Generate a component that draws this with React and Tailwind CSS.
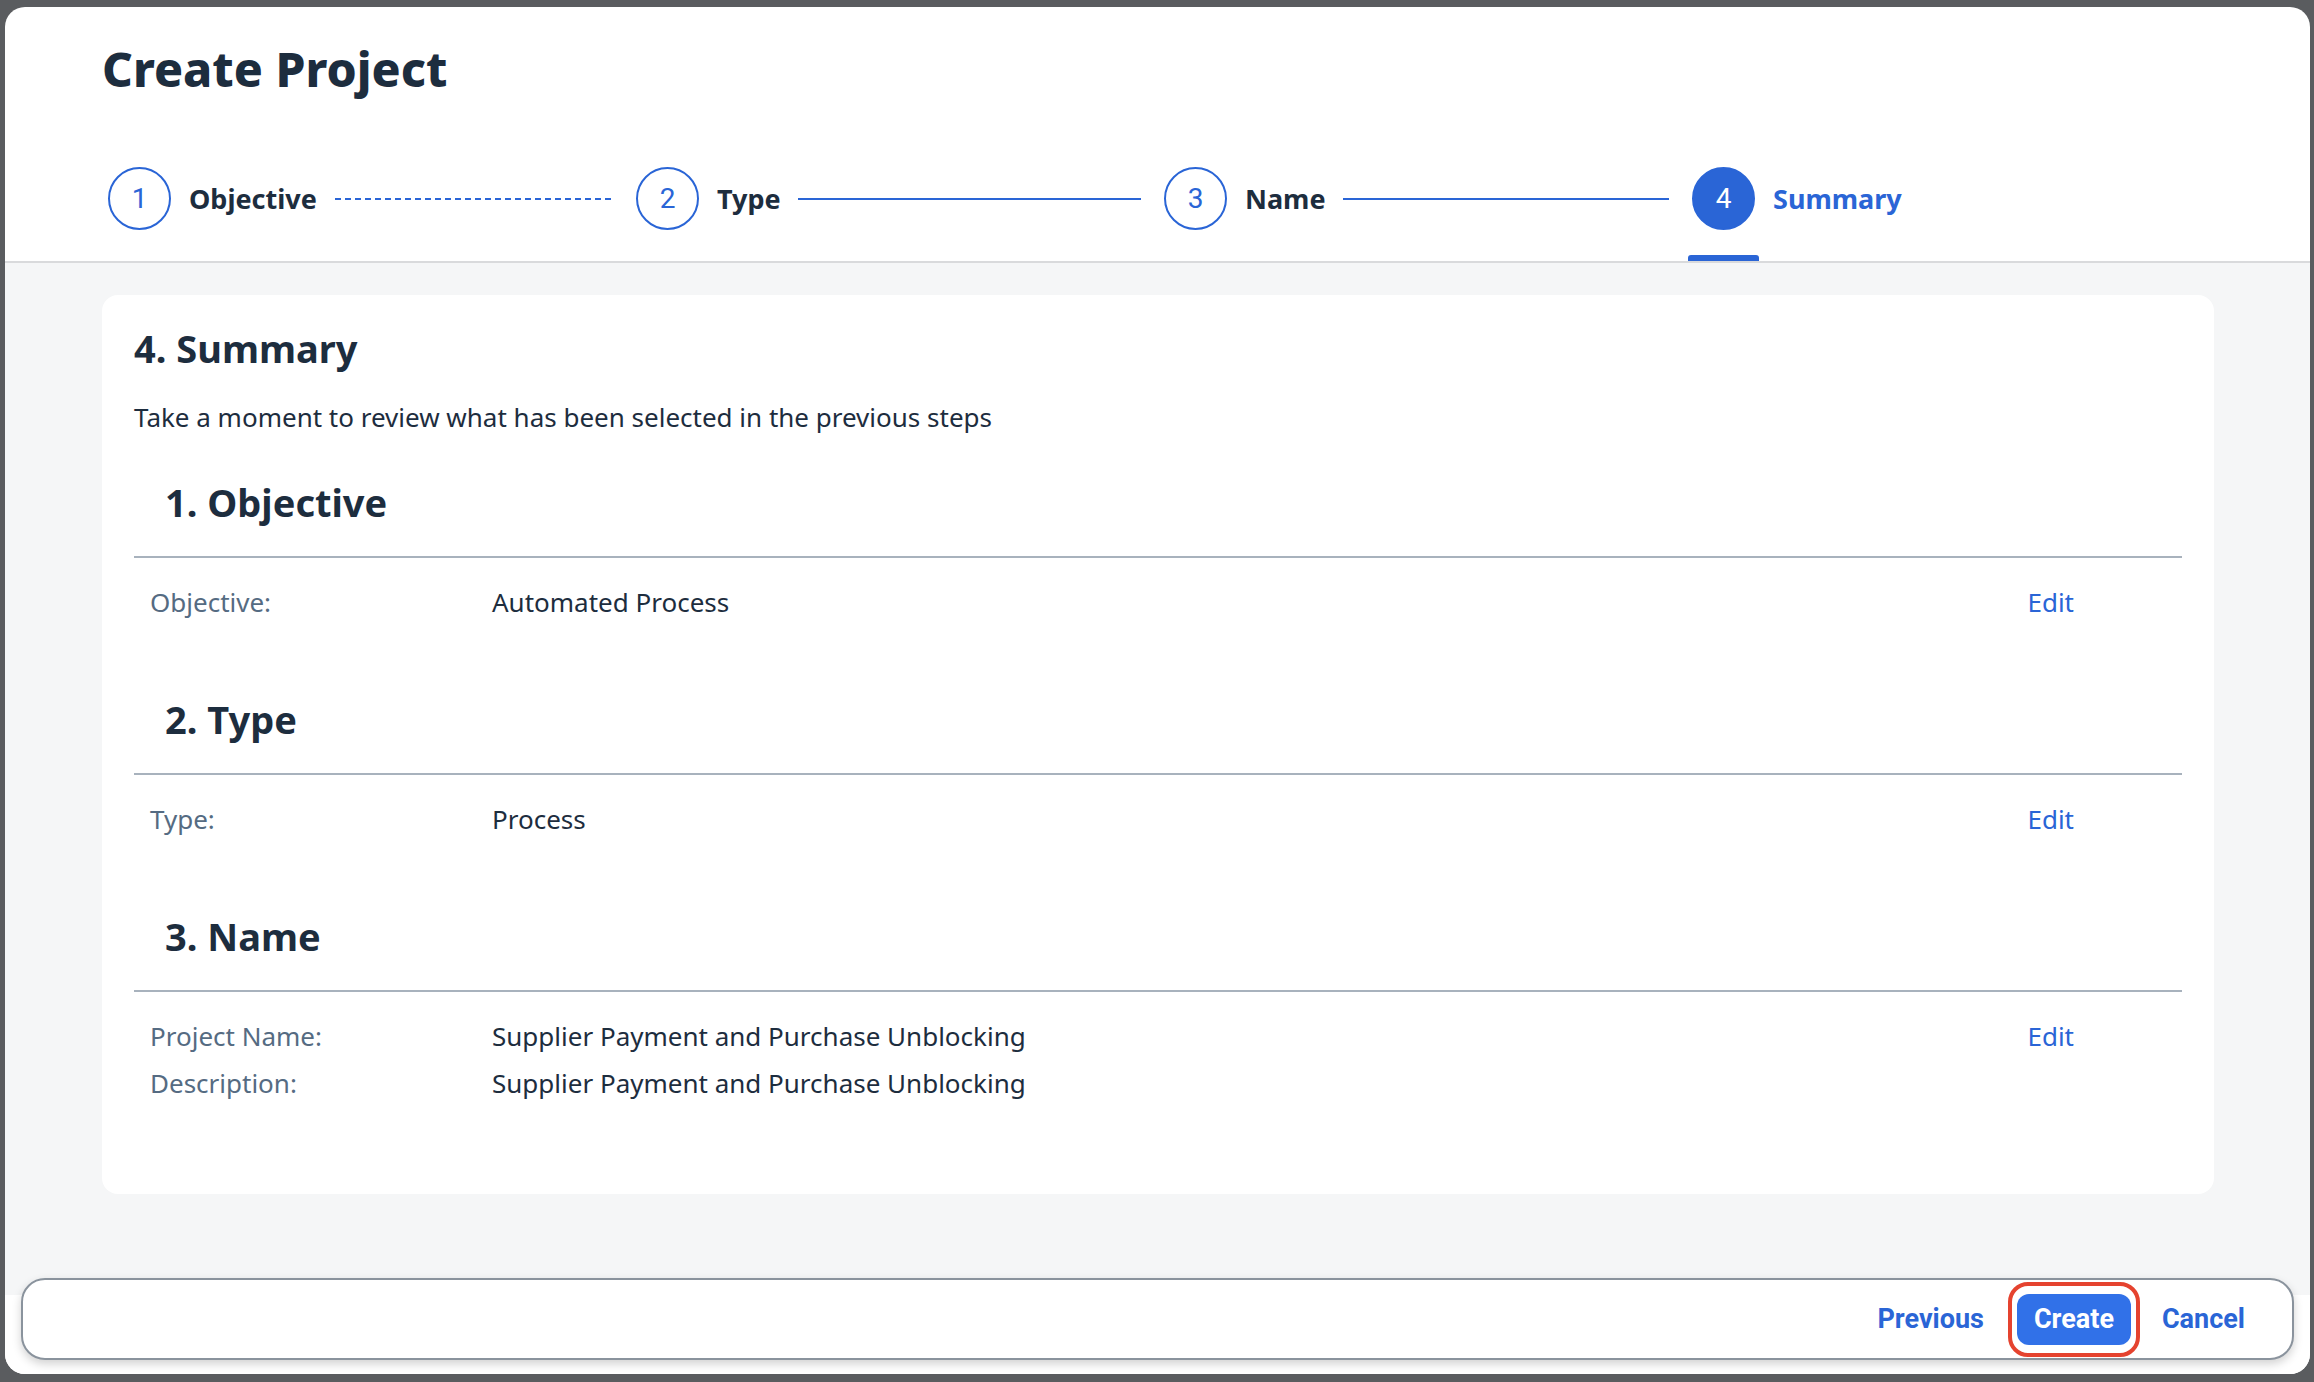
import React from 'react';

const steps = [
  { n: 1, label: 'Objective', line: 'dashed' },
  { n: 2, label: 'Type', line: 'solid' },
  { n: 3, label: 'Name', line: 'solid' },
  { n: 4, label: 'Summary', active: true },
];

const sections = [
  { title: '1. Objective', rows: [{ k: 'Objective:', v: 'Automated Process' }] },
  { title: '2. Type', rows: [{ k: 'Type:', v: 'Process' }] },
  {
    title: '3. Name',
    rows: [
      { k: 'Project Name:', v: 'Supplier Payment and Purchase Unblocking' },
      { k: 'Description:', v: 'Supplier Payment and Purchase Unblocking' },
    ],
  },
];

const Step = ({ s }) => (
  <div className={`flex items-center h-[63px] ${s.active ? '' : 'w-[528px]'}`}>
    <div className="relative">
      <div
        className={`w-[63px] h-[63px] rounded-full border-2 border-[#2a65d6] flex items-center justify-center text-[28px] font-['Roboto',sans-serif] ${
          s.active ? 'bg-[#2a65d6] text-white' : 'text-[#2a65d6]'
        }`}
      >
        {s.n}
      </div>
      {s.active && (
        <div className="absolute top-[88px] left-[-4px] w-[71px] h-[6px] rounded-t-[3px] bg-[#2a65d6]" />
      )}
    </div>
    <span className={`ml-[18px] text-[27px] font-bold leading-none ${s.active ? 'text-[#2a65d6]' : 'text-[#1d2d3e]'}`}>
      {s.label}
    </span>
    {s.line === 'dashed' && (
      <div className="flex-1 ml-[18px] mr-[22px] h-[2px] bg-[repeating-linear-gradient(to_right,#2a65d6_0px,#2a65d6_6px,transparent_6px,transparent_10px)]" />
    )}
    {s.line === 'solid' && <div className="flex-1 ml-[17px] mr-[23px] h-[2px] bg-[#2a65d6]" />}
  </div>
);

const App = () => {
  return (
    <div className="w-[2314px] h-[1382px] bg-[#5a5c5f] pt-[7px] pl-[5px] pr-[4px] pb-[8px] font-['Noto_Sans',sans-serif]">
      <div className="w-full h-full bg-white rounded-[20px] overflow-hidden flex flex-col">
        {/* header */}
        <div className="h-[256px] shrink-0 border-b-2 border-[#d9dadc] pl-[97px] pt-[38px]">
          <h1 className="text-[48px] leading-[48px] font-extrabold text-[#1d2d3e]">Create Project</h1>
          <div className="flex items-center mt-[74px] ml-[6px]">
            {steps.map(s => (
              <Step key={s.n} s={s} />
            ))}
          </div>
        </div>

        {/* body */}
        <div className="flex-1 bg-[#f5f6f7] pl-[97px] pr-[96px] pt-[32px]">
          <div className="bg-white rounded-[16px] px-[32px] pt-[30px] pb-[93px]">
            <h2 className="text-[38px] leading-[46px] font-bold text-[#1d2d3e]">4. Summary</h2>
            <p className="mt-[28px] text-[26px] leading-[36px] text-[#1d2d3e]">
              Take a moment to review what has been selected in the previous steps
            </p>
            <div className="mt-[44px] flex flex-col gap-[76px]">
              {sections.map(sec => (
                <div key={sec.title}>
                  <h3 className="pl-[31px] pb-[31px] border-b-2 border-[#a8b2bd] text-[38px] leading-[46px] font-bold text-[#1d2d3e]">
                    {sec.title}
                  </h3>
                  <div className="mt-[26px] flex flex-col gap-[11px]">
                    {sec.rows.map((r, i) => (
                      <div key={r.k} className="flex items-center pl-[16px] text-[26px] leading-[36px]">
                        <span className="w-[342px] text-[#556b82]">{r.k}</span>
                        <span className="flex-1 text-[#1d2d3e]">{r.v}</span>
                        {i === 0 && <span className="mr-[108px] text-[#2a65d6]">Edit</span>}
                      </div>
                    ))}
                  </div>
                </div>
              ))}
            </div>
          </div>
        </div>

        {/* footer */}
        <div className="h-[79px] shrink-0 bg-white px-[16px]">
          <div className="-mt-[17px] h-[82px] bg-white border-2 border-[#8a939d] rounded-[24px] shadow-[0_4px_10px_rgba(0,0,0,0.18)] flex items-center justify-end pr-[47px] text-[27px] font-bold font-['Roboto',sans-serif]">
            <span className="text-[#2a65d6]">Previous</span>
            <div className="ml-[24px] border-4 border-[#e5432f] rounded-[20px] px-[5px] py-[8px]">
              <button className="w-[114px] h-[51px] rounded-[12px] bg-[#3171e8] text-white font-bold">Create</button>
            </div>
            <span className="ml-[22px] text-[#2a65d6]">Cancel</span>
          </div>
        </div>
      </div>
    </div>
  );
};

export default App;
